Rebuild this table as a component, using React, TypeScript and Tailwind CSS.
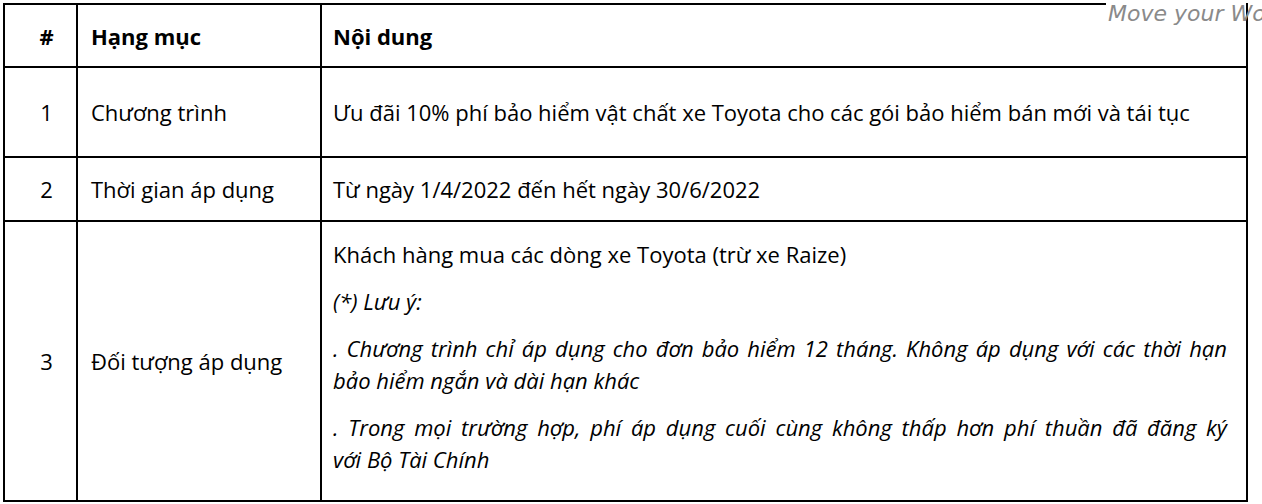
const rows = [
  {
    no: "1",
    item: "Chương trình",
    content: (
      <p>
        Ưu đãi 10% phí bảo hiểm vật chất xe Toyota cho các gói bảo hiểm bán
        mới và tái tục
      </p>
    ),
    height: "h-[90px]",
  },
  {
    no: "2",
    item: "Thời gian áp dụng",
    content: <p>Từ ngày 1/4/2022 đến hết ngày 30/6/2022</p>,
    height: "h-[64px]",
  },
];

export default function App() {
  return (
    <div
      className="relative w-[1262px] h-[504px] overflow-hidden bg-white pt-[3px] pl-[3px] text-black"
      style={{ fontFamily: "'Open Sans', sans-serif" }}
    >
      <table className="w-[1245px] table-fixed border-separate border-spacing-0 border-t-2 border-l-2 border-black text-[22px] leading-[30px]">
        <colgroup>
          <col className="w-[73px]" />
          <col className="w-[244px]" />
          <col className="w-[926px]" />
        </colgroup>
        <thead>
          <tr className="h-[63px] font-bold">
            <th className="border-r-2 border-b-2 border-black pl-[12px] text-center align-middle">
              #
            </th>
            <th className="border-r-2 border-b-2 border-black pl-[13px] text-left align-middle">
              Hạng mục
            </th>
            <th className="border-r-2 border-b-2 border-black pl-[11px] text-left align-middle">
              Nội dung
            </th>
          </tr>
        </thead>
        <tbody>
          {rows.map((r) => (
            <tr key={r.no} className={r.height}>
              <td className="border-r-2 border-b-2 border-black pl-[12px] text-center align-middle">
                {r.no}
              </td>
              <td className="border-r-2 border-b-2 border-black pl-[13px] align-middle">
                {r.item}
              </td>
              <td className="border-r-2 border-b-2 border-black pl-[11px] pr-[19px] align-middle">
                {r.content}
              </td>
            </tr>
          ))}
          <tr className="h-[280px]">
            <td className="border-r-2 border-b-2 border-black pl-[12px] text-center align-middle">
              3
            </td>
            <td className="border-r-2 border-b-2 border-black pl-[13px] align-middle">
              Đối tượng áp dụng
            </td>
            <td className="border-r-2 border-b-2 border-black pl-[11px] pr-[19px] pt-[16px] align-top leading-[32px]">
              <div className="flex flex-col gap-[15px]">
                <p>Khách hàng mua các dòng xe Toyota (trừ xe Raize)</p>
                <p className="italic">(*) Lưu ý:</p>
                <p className="italic">
                  <span className="block whitespace-nowrap [text-align-last:justify]">
                    . Chương trình chỉ áp dụng cho đơn bảo hiểm 12 tháng. Không
                    áp dụng với các thời hạn
                  </span>
                  <span className="block">bảo hiểm ngắn và dài hạn khác</span>
                </p>
                <p className="italic">
                  <span className="block whitespace-nowrap [text-align-last:justify]">
                    . Trong mọi trường hợp, phí áp dụng cuối cùng không thấp hơn
                    phí thuần đã đăng ký
                  </span>
                  <span className="block">với Bộ Tài Chính</span>
                </p>
              </div>
            </td>
          </tr>
        </tbody>
      </table>
      <div className="absolute top-0 left-[1106px] h-[30px] w-[140px] bg-white" />
      <div
        className="absolute top-[1px] left-[1108px] whitespace-nowrap text-[22px] font-extralight italic leading-[26px] text-[#8a8a8a]"
        style={{ fontFamily: "'DejaVu Sans', sans-serif" }}
      >
        Move your World
      </div>
    </div>
  );
}
